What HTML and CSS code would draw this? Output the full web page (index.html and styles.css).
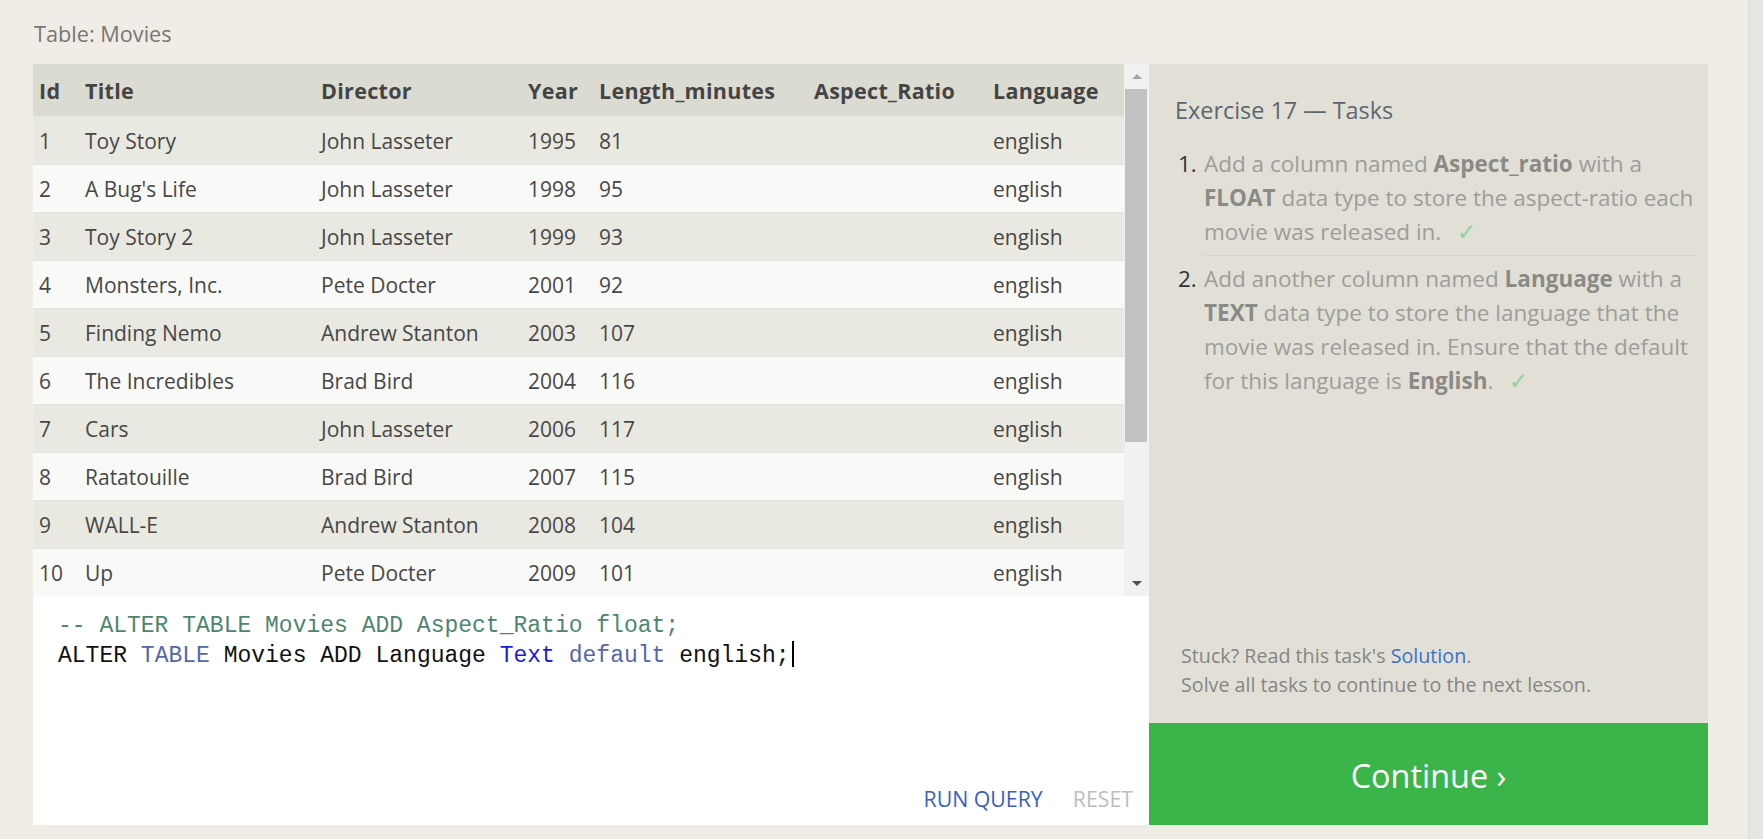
FILE: index.html
```html
<!DOCTYPE html>
<html>
<head>
<meta charset="utf-8">
<link rel="stylesheet" href="styles.css">
</head>
<body>
<div class="screen">
  <main class="page">
    <div class="table-title">Table: Movies</div>
    <div class="workspace">
      <section class="left">
        <div class="table-wrap">
          <table class="movies">
            <colgroup>
              <col class="c-id"><col class="c-title"><col class="c-dir"><col class="c-year"><col class="c-len"><col class="c-asp"><col class="c-lang">
            </colgroup>
            <thead>
              <tr><th>Id</th><th>Title</th><th>Director</th><th>Year</th><th>Length_minutes</th><th>Aspect_Ratio</th><th>Language</th></tr>
            </thead>
            <tbody>
              <tr><td>1</td><td>Toy Story</td><td>John Lasseter</td><td>1995</td><td>81</td><td></td><td>english</td></tr>
              <tr><td>2</td><td>A Bug's Life</td><td>John Lasseter</td><td>1998</td><td>95</td><td></td><td>english</td></tr>
              <tr><td>3</td><td>Toy Story 2</td><td>John Lasseter</td><td>1999</td><td>93</td><td></td><td>english</td></tr>
              <tr><td>4</td><td>Monsters, Inc.</td><td>Pete Docter</td><td>2001</td><td>92</td><td></td><td>english</td></tr>
              <tr><td>5</td><td>Finding Nemo</td><td>Andrew Stanton</td><td>2003</td><td>107</td><td></td><td>english</td></tr>
              <tr><td>6</td><td>The Incredibles</td><td>Brad Bird</td><td>2004</td><td>116</td><td></td><td>english</td></tr>
              <tr><td>7</td><td>Cars</td><td>John Lasseter</td><td>2006</td><td>117</td><td></td><td>english</td></tr>
              <tr><td>8</td><td>Ratatouille</td><td>Brad Bird</td><td>2007</td><td>115</td><td></td><td>english</td></tr>
              <tr><td>9</td><td>WALL-E</td><td>Andrew Stanton</td><td>2008</td><td>104</td><td></td><td>english</td></tr>
              <tr><td>10</td><td>Up</td><td>Pete Docter</td><td>2009</td><td>101</td><td></td><td>english</td></tr>
            </tbody>
          </table>
          <div class="vscroll">
            <div class="arrow-box"><span class="tri-up"></span></div>
            <div class="thumb"></div>
            <div class="track"></div>
            <div class="arrow-box"><span class="tri-down"></span></div>
          </div>
        </div>
        <div class="editor">
          <div class="code">
            <div class="line"><span class="cm">-- ALTER TABLE Movies ADD Aspect_Ratio float;</span></div>
            <div class="line">ALTER <span class="kw">TABLE</span> Movies ADD Language <span class="ty">Text</span> <span class="kw">default</span> english;<span class="caret"></span></div>
          </div>
          <div class="actions">
            <span class="run">RUN QUERY</span>
            <span class="reset">RESET</span>
          </div>
        </div>
      </section>
      <aside class="right">
        <div class="tasks">
          <h2 class="tasks-title">Exercise 17 — Tasks</h2>
          <ol class="task-list">
            <li class="task"><span class="num">1.</span><span class="txt">Add a column named <b>Aspect_ratio</b> with a <b>FLOAT</b> data type to store the aspect-ratio each movie was released in. <span class="check">✓</span></span></li>
            <li class="task"><span class="num">2.</span><span class="txt">Add another column named <b>Language</b> with a <b>TEXT</b> data type to store the language that the movie was released in. Ensure that the default for this language is <b>English</b>. <span class="check">✓</span></span></li>
          </ol>
          <div class="stuck">
            <div>Stuck? Read this task's <span class="link">Solution</span>.</div>
            <div>Solve all tasks to continue to the next lesson.</div>
          </div>
        </div>
        <div class="continue">Continue ›</div>
      </aside>
    </div>
  </main>
  <div class="page-scroll"></div>
</div>
</body>
</html>
```

FILE: styles.css
```css
html, body {
  margin: 0;
  padding: 0;
}
body {
  background: #efede6;
  font-family: "Open Sans", "Noto Sans", sans-serif;
  color: #444;
  width: 1763px;
  height: 839px;
  overflow: hidden;
}
.screen {
  display: flex;
  height: 839px;
}
.page {
  flex: 1;
  padding: 20px 0 0 33px;
}
.page-scroll {
  width: 14px;
  background: #e7e5e0;
  border-left: 1px solid #e0ded8;
}
.table-title {
  font-size: 21.7px;
  line-height: 28px;
  color: #777;
  margin-left: 1px;
}
.workspace {
  display: flex;
  margin-top: 16px;
}
.left {
  width: 1116px;
  display: flex;
  flex-direction: column;
}
.table-wrap {
  display: flex;
  height: 532px;
}
.movies {
  width: 1091px;
  border-collapse: collapse;
  table-layout: fixed;
  font-size: 21px;
}
.c-id { width: 45px; }
.c-title { width: 236px; }
.c-dir { width: 207px; }
.c-year { width: 71px; }
.c-len { width: 215px; }
.c-asp { width: 179px; }
.c-lang { width: 138px; }
.movies th {
  background: #dcdbd2;
  height: 52px;
  padding: 0 0 0 7px;
  text-align: left;
  font-weight: 700;
  font-size: 21.5px;
  letter-spacing: 0.3px;
  color: #444;
  white-space: nowrap;
}
.movies th:first-child,
.movies td:first-child { padding-left: 6px; }
.movies td {
  height: 47px;
  padding: 0 0 0 7px;
  color: #474747;
  white-space: nowrap;
  border-top: 1px solid #e4e3dd;
}
.movies tbody tr:nth-child(odd) td { background: #e9e8e1; }
.movies tbody tr:nth-child(even) td { background: #f9f9f8; }
.vscroll {
  width: 25px;
  background: #f1f1f1;
  display: flex;
  flex-direction: column;
}
.arrow-box {
  height: 25px;
  display: flex;
  align-items: center;
  justify-content: center;
}
.tri-up {
  width: 0; height: 0;
  border-left: 5px solid transparent;
  border-right: 5px solid transparent;
  border-bottom: 5px solid #a3a3a3;
}
.tri-down {
  width: 0; height: 0;
  border-left: 5px solid transparent;
  border-right: 5px solid transparent;
  border-top: 5px solid #505050;
}
.thumb {
  height: 353px;
  margin: 0 2px 0 1px;
  background: #c1c1c1;
}
.track { flex: 1; }
.editor {
  background: #fff;
  height: 229px;
  display: flex;
  flex-direction: column;
  justify-content: space-between;
}
.code {
  padding: 16px 0 0 25px;
  font-family: "Liberation Mono", "DejaVu Sans Mono", monospace;
  font-size: 23px;
  line-height: 29px;
  color: #111;
}
.line { white-space: pre; }
.cm { color: #4d8670; }
.kw { color: #5567aa; }
.ty { color: #1a1adf; }
.caret {
  display: inline-block;
  width: 2px;
  height: 26px;
  background: #000;
  vertical-align: -5px;
  margin-left: 2px;
}
.actions {
  display: flex;
  justify-content: flex-end;
  gap: 30px;
  padding: 0 16px 12px 0;
  font-size: 21.3px;
  line-height: 28px;
}
.run { color: #3a5fbf; }
.reset { color: #bdbdbd; }
.right {
  width: 559px;
  display: flex;
  flex-direction: column;
}
.tasks {
  flex: 1;
  background: #e2e0d6;
  padding: 0 0 0 26px;
  display: flex;
  flex-direction: column;
}
.tasks-title {
  margin: 30px 0 0 0;
  font-size: 23.4px;
  font-weight: 400;
  line-height: 32px;
  color: #5c6670;
}
.task-list {
  list-style: none;
  margin: 21px 0 0 0;
  padding: 0;
  width: 529px;
}
.task {
  display: flex;
  font-size: 22.5px;
  line-height: 34px;
  color: #9d9d9a;
}
.task + .task {
  margin-top: 6px;
}
.task + .task > .num {
  padding-top: 7px;
}
.task + .task > .txt {
  border-top: 1px solid #d6d4cb;
  padding-top: 6px;
}
.num {
  width: 29px;
  flex: none;
  color: #333;
  text-align: left;
  padding-left: 3px;
  box-sizing: border-box;
}
.txt { flex: none; width: 492px; }
.txt b { color: #8a8a86; font-weight: 700; }
.check {
  color: #8fd39b;
  margin-left: 10px;
}
.stuck {
  margin-top: auto;
  padding: 0 0 24px 6px;
  font-size: 19.7px;
  line-height: 29px;
  color: #858585;
}
.link { color: #3b6fd1; }
.continue {
  height: 102px;
  background: #3bb54a;
  color: #fff;
  font-size: 32.4px;
  display: flex;
  align-items: center;
  justify-content: center;
  padding-top: 2px;
  box-sizing: border-box;
}
```
